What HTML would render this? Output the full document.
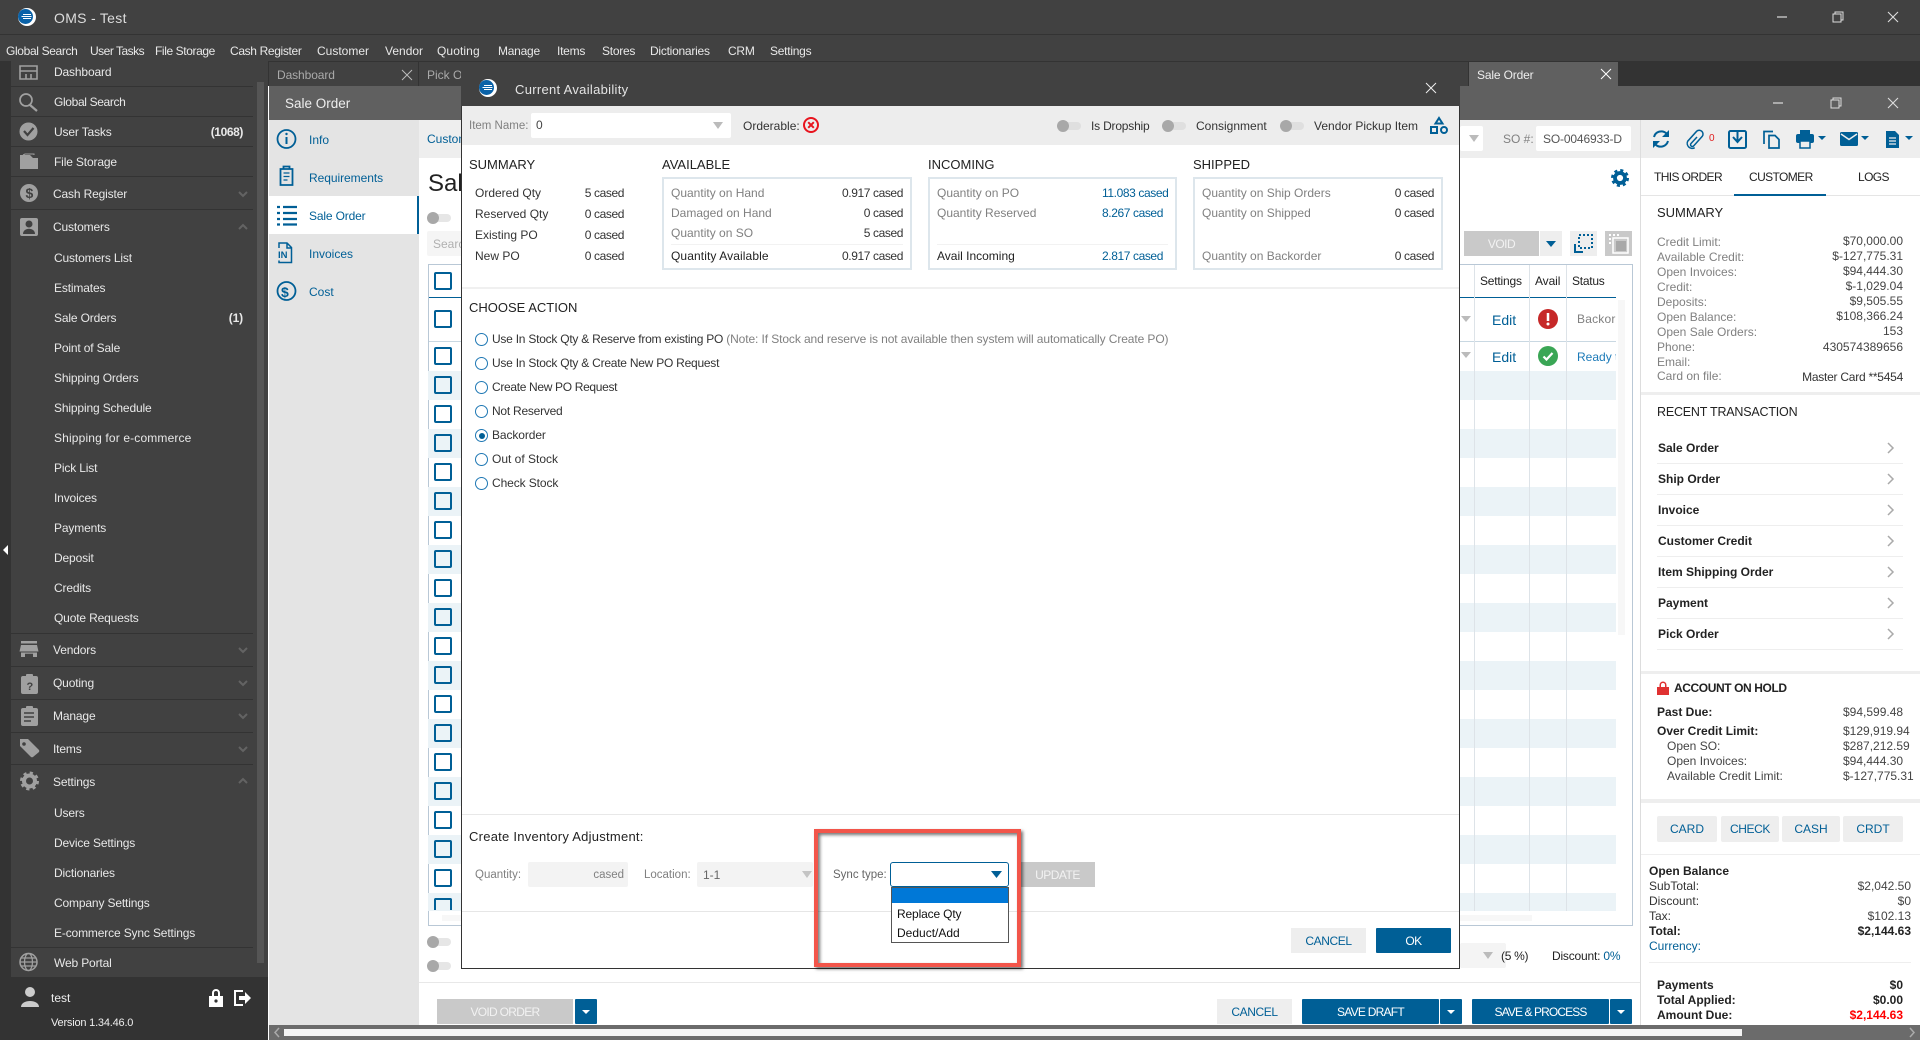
<!DOCTYPE html>
<html><head><meta charset="utf-8"><title>OMS - Test</title>
<style>
html,body{margin:0;padding:0;width:1920px;height:1040px;overflow:hidden;background:#fff}
body{position:relative;font:12px "Liberation Sans",Arial,sans-serif;color:#222}
div,svg{position:absolute}
.b{box-sizing:border-box}
.t{white-space:nowrap;line-height:16px;margin-top:-8px}
.s{color:#e8e8e8;letter-spacing:-.15px}
.m{color:#e8e8e8;letter-spacing:-.25px}
.bl{color:#005f96}
.g{color:#808080}
.h{font-size:13px;color:#222}
.f{font-weight:bold}
.v{letter-spacing:-.4px}
.r{letter-spacing:-.24px;color:#333}
.c{font-size:12px;letter-spacing:-.6px;color:#222}
.btn{line-height:26px;height:25px;text-align:center;box-sizing:border-box;white-space:nowrap;letter-spacing:-.5px}
.pb{background:#005f96;color:#fff;border-radius:1px}
.gb{background:#eee;color:#005f96}
.db{background:#c9c9c9;color:#f2f2f2}
.cb{width:18px;height:18px;box-sizing:border-box;border:2px solid #005f96;border-radius:2px;left:434px;background:transparent}
.sep{height:1px;background:#333;left:11px;width:242px}
.row{left:428px;width:1188px;height:29px;background:#ebf3f7}
.tg{width:24px;height:12px}
.tg i{position:absolute;left:2px;top:2px;width:22px;height:8px;border-radius:4px;background:#e6e6e6}
.tg b{position:absolute;left:0;top:0;width:12px;height:12px;border-radius:6px;background:#a8a8a8}
.rd{width:13px;height:13px;box-sizing:border-box;border:1.5px solid #1f78b4;border-radius:50%;left:475px;background:#fff}
.ln{height:1px;background:#eee}
.box{box-sizing:border-box;border:2px solid #dde6ec;height:93px;top:177px;background:#fff}
</style></head>
<body>
<!-- top chrome -->
<div style="left:0;top:0;width:1920px;height:61px;background:#414141"></div>
<div style="left:0;top:34px;width:1920px;height:1px;background:#333"></div>
<div style="left:0;top:61px;width:1920px;height:25px;background:#333"></div>
<svg style="left:18px;top:8px" width="18" height="18" viewBox="0 0 18 18"><circle cx="9" cy="9" r="9" fill="#fff"/><circle cx="7.500" cy="8.500" r="7.500" fill="#0a62a8"/><path d="M5 6.500h8M3.500 8.500h10M5 10.500h8" stroke="#fff"/></svg>
<div class="t" style="left:54px;top:18px;font-size:14px;color:#ddd;letter-spacing:.3px">OMS - Test</div>
<div class="t m" style="left:6px;top:51px;letter-spacing:-.35px">Global Search</div>
<div class="t m" style="left:90px;top:51px;letter-spacing:-.5px">User Tasks</div>
<div class="t m" style="left:155px;top:51px;letter-spacing:-.4px">File Storage</div>
<div class="t m" style="left:230px;top:51px;letter-spacing:-.35px">Cash Register</div>
<div class="t m" style="left:317px;top:51px;letter-spacing:0">Customer</div>
<div class="t m" style="left:385px;top:51px;letter-spacing:0">Vendor</div>
<div class="t m" style="left:437px;top:51px;letter-spacing:.1px">Quoting</div>
<div class="t m" style="left:498px;top:51px">Manage</div>
<div class="t m" style="left:557px;top:51px">Items</div>
<div class="t m" style="left:602px;top:51px">Stores</div>
<div class="t m" style="left:650px;top:51px">Dictionaries</div>
<div class="t m" style="left:728px;top:51px">CRM</div>
<div class="t m" style="left:770px;top:51px">Settings</div>
<svg style="left:1770px;top:10px" width="140" height="14" viewBox="0 0 140 14" fill="none" stroke="#ddd"><path d="M7 7h10" stroke-width="1.200"/><path d="M63 4h8v8h-8zM65 4V2h8v8h-2"/><path d="M118 2l10 10M128 2l-10 10" stroke-width="1.100"/></svg>

<!-- sidebar -->
<div style="left:0;top:61px;width:268px;height:979px;background:#333"></div>
<div style="left:11px;top:61px;width:257px;height:916px;background:#414141"></div>
<div style="left:257px;top:82px;width:7px;height:881px;background:#555"></div>
<svg style="left:0;top:544px" width="10" height="12"><path d="M8 1L3 6l5 5z" fill="#fff"/></svg>
<div class="sep" style="top:86px"></div><div class="sep" style="top:116px"></div><div class="sep" style="top:146px"></div><div class="sep" style="top:176px"></div><div class="sep" style="top:209px"></div><div class="sep" style="top:633px"></div><div class="sep" style="top:666px"></div><div class="sep" style="top:699px"></div><div class="sep" style="top:732px"></div><div class="sep" style="top:764px"></div><div class="sep" style="top:947px"></div>
<div class="t s" style="left:54px;top:72px">Dashboard</div>
<div class="t s" style="left:54px;top:102px;letter-spacing:-.35px">Global Search</div>
<div class="t s" style="left:54px;top:132px">User Tasks</div>
<div class="t s f" style="right:1677px;top:132px;letter-spacing:-.4px">(1068)</div>
<div class="t s" style="left:54px;top:162px">File Storage</div>
<div class="t s" style="left:53px;top:194px">Cash Register</div>
<div class="t s" style="left:53px;top:227px">Customers</div>
<div class="t s" style="left:54px;top:258px">Customers List</div>
<div class="t s" style="left:54px;top:288px">Estimates</div>
<div class="t s" style="left:54px;top:318px">Sale Orders</div>
<div class="t s f" style="right:1677px;top:318px">(1)</div>
<div class="t s" style="left:54px;top:348px">Point of Sale</div>
<div class="t s" style="left:54px;top:378px">Shipping Orders</div>
<div class="t s" style="left:54px;top:408px">Shipping Schedule</div>
<div class="t s" style="left:54px;top:438px;letter-spacing:.15px">Shipping for e-commerce</div>
<div class="t s" style="left:54px;top:468px">Pick List</div>
<div class="t s" style="left:54px;top:498px">Invoices</div>
<div class="t s" style="left:54px;top:528px">Payments</div>
<div class="t s" style="left:54px;top:558px">Deposit</div>
<div class="t s" style="left:54px;top:588px">Credits</div>
<div class="t s" style="left:54px;top:618px">Quote Requests</div>
<div class="t s" style="left:53px;top:650px">Vendors</div>
<div class="t s" style="left:53px;top:683px">Quoting</div>
<div class="t s" style="left:53px;top:716px">Manage</div>
<div class="t s" style="left:53px;top:749px">Items</div>
<div class="t s" style="left:53px;top:782px">Settings</div>
<div class="t s" style="left:54px;top:813px">Users</div>
<div class="t s" style="left:54px;top:843px">Device Settings</div>
<div class="t s" style="left:54px;top:873px">Dictionaries</div>
<div class="t s" style="left:54px;top:903px">Company Settings</div>
<div class="t s" style="left:54px;top:933px">E-commerce Sync Settings</div>
<div class="t s" style="left:54px;top:963px">Web Portal</div>
<!-- sidebar icons -->
<svg style="left:0;top:61px" width="268" height="916" viewBox="0 61 268 916">
<g fill="none" stroke="#a0a0a0">
<path d="M20 66h17v13H20zM20 71h17M26 74v5M31 74v5" stroke-width="1.600"/>
<circle cx="26" cy="100" r="6" stroke-width="1.700"/><path d="M30 105l7 6" stroke-width="2.200"/>
</g>
<g fill="#a0a0a0">
<circle cx="28.500" cy="131.500" r="9"/>
<path d="M20 155h10l3 3h5v11H20z"/>
<circle cx="29" cy="193" r="9"/>
<rect x="20" y="218" width="18" height="18" rx="2"/>
<path d="M21 641h16v2.500H21zM21 645h16l1.500 6.500h-19zM21 652.500h4V657h-4zM33 652.500h4V657h-4zM25 652.500h8v1.200h-8z"/>
<rect x="21" y="676" width="17" height="18" rx="2"/><rect x="26" y="674" width="7" height="4" rx="1"/>
<rect x="21" y="708" width="17" height="18" rx="2"/><rect x="26" y="706" width="7" height="4" rx="1"/>
<path d="M20 739h8l11 11a2 2 0 0 1 0 2l-6 5a2 2 0 0 1-2 0L20 746z"/>
</g>
<path d="M24 131l3.500 4 6-7" fill="none" stroke="#414141" stroke-width="2.200"/>
<path d="M34 155v-1h-9l-2 1" fill="none" stroke="#a0a0a0"/>
<text x="25.500" y="198" font-size="14" fill="#414141" font-weight="bold" font-family="Liberation Sans">$</text>
<circle cx="29" cy="224" r="3.500" fill="#414141"/><path d="M23 234c0-7 12-7 12 0z" fill="#414141"/>
<text x="26.500" y="690" font-size="11" fill="#414141" font-weight="bold" font-family="Liberation Sans">?</text>
<path d="M24 713h10M24 717h10M24 721h7" stroke="#414141" stroke-width="1.500"/>
<circle cx="24" cy="744" r="1.800" fill="#414141"/>
<g fill="none" stroke="#a0a0a0"><circle cx="29.500" cy="781" r="5.500" stroke-width="4"/><circle cx="29.500" cy="781" r="8" stroke-width="3" stroke-dasharray="3.100 3.180"/>
<circle cx="28.500" cy="962" r="8.500" stroke-width="1.500"/><ellipse cx="28.500" cy="962" rx="4" ry="8.500" stroke-width="1.300"/><path d="M20 962h17M21 958h15M21 966h15" stroke-width="1.200"/></g>
<g fill="none" stroke="#636363" stroke-width="2"><path d="M239 192l4 4 4-4M239 648l4 4 4-4M239 681l4 4 4-4M239 714l4 4 4-4M239 747l4 4 4-4M239 229l4-4 4 4M239 783l4-4 4 4"/></g>
</svg>
<!-- footer -->
<svg style="left:18px;top:985px" width="24" height="24"><circle cx="12" cy="7" r="5" fill="#ccc"/><path d="M3 22c0-8 18-8 18 0z" fill="#ccc"/></svg>
<div class="t" style="left:51px;top:998px;color:#eee">test</div>
<div class="t" style="left:51px;top:1023px;color:#eee;font-size:11px;letter-spacing:-.2px">Version 1.34.46.0</div>
<svg style="left:208px;top:988px" width="44" height="20" fill="#fff"><path d="M1 8h14v11H1zM4 8V5a4 4 0 0 1 8 0v3h-2V5a2 2 0 0 0-4 0v3z"/><circle cx="8" cy="13" r="1.600" fill="#333"/><path d="M35 3h-8v14h8" fill="none" stroke="#fff" stroke-width="2"/><path d="M31 8h6V4l6 6-6 6v-4h-6z"/></svg>

<!-- tabs & window -->
<div style="left:269px;top:62px;width:149px;height:24px;background:#414141"></div>
<div class="t" style="left:277px;top:75px;color:#aaa;letter-spacing:-.1px">Dashboard</div>
<svg style="left:401px;top:69px" width="12" height="12" stroke="#bbb"><path d="M1 1l10 10M11 1L1 11"/></svg>
<div style="left:419px;top:62px;width:1049px;height:24px;background:#414141"></div>
<div class="t" style="left:427px;top:75px;color:#aaa">Pick O</div>
<div style="left:1469px;top:62px;width:149px;height:24px;background:#606060"></div>
<div class="t" style="left:1477px;top:75px;color:#eee;letter-spacing:-.15px">Sale Order</div>
<svg style="left:1600px;top:68px" width="12" height="12" stroke="#fff"><path d="M1 1l10 10M11 1L1 11"/></svg>
<div style="left:269px;top:86px;width:1651px;height:34px;background:#606060"></div>
<div class="t" style="left:285px;top:104px;color:#eee;font-size:13.500px">Sale Order</div>
<svg style="left:1770px;top:96px" width="140" height="14" fill="none" stroke="#ddd"><path d="M3 7h10" stroke-width="1.200"/><path d="M61 4h8v8h-8zM63 4V2h8v8h-2"/><path d="M118 2l10 10M128 2l-10 10" stroke-width="1.100"/></svg>

<!-- left panel -->
<div style="left:269px;top:120px;width:150px;height:905px;background:#e4e4e4"></div>
<div class="b" style="left:269px;top:196px;width:150px;height:38px;background:#fff;border-right:2px solid #005f96"></div>
<div class="t bl" style="left:309px;top:140px">Info</div>
<div class="t bl" style="left:309px;top:178px;letter-spacing:-.05px">Requirements</div>
<div class="t bl" style="left:309px;top:216px;letter-spacing:-.15px">Sale Order</div>
<div class="t bl" style="left:309px;top:254px">Invoices</div>
<div class="t bl" style="left:309px;top:292px">Cost</div>
<svg style="left:276px;top:128px" width="22" height="176" viewBox="0 0 22 176" fill="none" stroke="#005f96">
<circle cx="10.500" cy="11" r="9" stroke-width="1.800"/><path d="M10.500 9v7" stroke-width="2"/><circle cx="10.500" cy="6" r="1.200" fill="#005f96" stroke="none"/>
<path d="M4.500 41h12v16h-12z M7.500 41v-2.500h6V41" stroke-width="1.800"/><path d="M7.500 45h6M7.500 48.500h6M7.500 52h4" stroke-width="1.300"/>
<path d="M1 79h3M7 79h14M1 85h3M7 85h14M1 91h3M7 91h14M1 96.500h3M7 96.500h14" stroke-width="2.300"/>
<path d="M3 120v-5h8l4.500 4.500v15H3v-2M11 115v5h4.500" stroke-width="1.500"/>
<circle cx="10.500" cy="163" r="9" stroke-width="1.800"/>
</svg>
<svg style="left:277px;top:247px" width="16" height="12"><text x="1" y="11" font-size="9.500" font-weight="bold" fill="#005f96" font-family="Liberation Sans">IN</text></svg>
<svg style="left:281px;top:282px" width="11" height="20"><text x="0" y="15" font-size="14" font-weight="bold" fill="#005f96" font-family="Liberation Sans">$</text></svg>

<!-- main bg -->
<div style="left:419px;top:120px;width:1221px;height:38px;background:#eee"></div>
<div class="t bl" style="left:427px;top:139px">Customer</div>
<div class="t" style="left:428px;top:184px;font-size:24px;line-height:30px;margin-top:-15px;color:#222">Sale Order</div>
<div class="tg" style="left:427px;top:212px"><i></i><b></b></div>
<div class="b" style="left:427px;top:231px;width:200px;height:25px;background:#f5f5f5;border-radius:2px"></div>
<div class="t" style="left:433px;top:244px;color:#b0b0b0">Search</div>
<!-- grid -->
<div class="b" style="left:428px;top:264px;width:1205px;height:662px;border:1px solid #b9c8d6;background:#fff"></div>
<div style="left:429px;top:297px;width:1187px;height:1px;background:#005f96"></div>
<div style="left:429px;top:341px;width:1187px;height:1px;background:#c9d8e2"></div>
<div class="row" style="top:371px"></div><div class="row" style="top:429px"></div><div class="row" style="top:487px"></div><div class="row" style="top:545px"></div><div class="row" style="top:603px"></div><div class="row" style="top:661px"></div><div class="row" style="top:719px"></div><div class="row" style="top:777px"></div><div class="row" style="top:835px"></div><div class="row" style="top:893px;height:18px"></div>
<div class="cb" style="top:272px"></div><div class="cb" style="top:310px"></div><div class="cb" style="top:347px"></div><div class="cb" style="top:376px"></div><div class="cb" style="top:405px"></div><div class="cb" style="top:434px"></div><div class="cb" style="top:463px"></div><div class="cb" style="top:492px"></div><div class="cb" style="top:521px"></div><div class="cb" style="top:550px"></div><div class="cb" style="top:579px"></div><div class="cb" style="top:608px"></div><div class="cb" style="top:637px"></div><div class="cb" style="top:666px"></div><div class="cb" style="top:695px"></div><div class="cb" style="top:724px"></div><div class="cb" style="top:753px"></div><div class="cb" style="top:782px"></div><div class="cb" style="top:811px"></div><div class="cb" style="top:840px"></div><div class="cb" style="top:869px"></div>
<div class="cb" style="top:898px;height:12px;border-bottom:0;border-radius:2px 2px 0 0"></div>
<div style="left:1474px;top:265px;width:1px;height:646px;background:#dde3e8"></div>
<div style="left:1529px;top:265px;width:1px;height:646px;background:#dde3e8"></div>
<div style="left:1566px;top:265px;width:1px;height:646px;background:#dde3e8"></div>
<div style="left:429px;top:911px;width:1203px;height:14px;background:#fff"></div>
<div style="left:442px;top:915px;width:1090px;height:6px;background:#f7f7f7"></div>
<div style="left:1618px;top:300px;width:7px;height:335px;background:#f7f7f7"></div>
<div class="t" style="left:1480px;top:281px;letter-spacing:-.2px">Settings</div>
<div class="t" style="left:1535px;top:281px;letter-spacing:-.1px">Avail</div>
<div class="t" style="left:1572px;top:281px;letter-spacing:-.25px">Status</div>
<div class="t bl" style="left:1492px;top:320px;font-size:14px">Edit</div>
<div class="t bl" style="left:1492px;top:357px;font-size:14px">Edit</div>
<svg style="left:1538px;top:309px" width="20" height="20"><circle cx="10" cy="10" r="10" fill="#c62828"/><path d="M10 4v8" stroke="#fff" stroke-width="2.500"/><circle cx="10" cy="15" r="1.500" fill="#fff"/></svg>
<svg style="left:1538px;top:346px" width="20" height="20"><circle cx="10" cy="10" r="10" fill="#3aa655"/><path d="M5.500 10.500l3 3 6-6.500" stroke="#fff" stroke-width="2.200" fill="none"/></svg>
<div style="left:1577px;top:310px;width:39px;height:18px;overflow:hidden"><div class="t g" style="left:0;top:9px;letter-spacing:.2px">Backorder</div></div>
<div style="left:1577px;top:347px;width:39px;height:18px;overflow:hidden"><div class="t" style="left:0;top:10px;color:#1c7ab8">Ready to</div></div>
<svg style="left:1460px;top:315px" width="12" height="48"><path d="M1 1h10L6 7zM1 37h10l-5 6z" fill="#bbb"/></svg>
<!-- toolbar to the right of dialog -->
<div class="b" style="left:1460px;top:126px;width:23px;height:25px;background:#fff;border-radius:2px"></div>
<svg style="left:1469px;top:135px" width="10" height="8"><path d="M0 0h10L5 7z" fill="#bbb"/></svg>
<div class="t g" style="left:1503px;top:139px">SO #:</div>
<div style="left:1536px;top:126px;width:95px;height:25px;background:#fff;border-radius:2px"></div>
<div class="t" style="left:1543px;top:139px;color:#555;letter-spacing:-.15px">SO-0046933-D</div>
<svg style="left:1611px;top:169px" width="18" height="18" fill="none" stroke="#005f96"><circle cx="9" cy="9" r="5" stroke-width="3.800"/><circle cx="9" cy="9" r="7.500" stroke-width="3" stroke-dasharray="3 2.890"/></svg>
<div class="btn db" style="left:1464px;top:231px;width:75px">VOID</div>
<div style="left:1540px;top:231px;width:22px;height:25px;background:#eee"></div>
<svg style="left:1546px;top:241px" width="10" height="6"><path d="M0 0h10L5 6z" fill="#005f96"/></svg>
<div style="left:1570px;top:231px;width:27px;height:25px;background:#eee"></div>
<svg style="left:1573px;top:233px" width="21" height="21" fill="none" stroke="#005f96"><path d="M2 11v8h8" stroke-width="2"/><path d="M6 2h13v13H6z" stroke-width="2" stroke-dasharray="2 2"/></svg>
<div style="left:1605px;top:231px;width:27px;height:25px;background:#c9c9c9"></div>
<svg style="left:1608px;top:233px" width="21" height="21"><path d="M1 1h2v2H1zM5 1h2v2H5zM9 1h2v2H9zM1 5h2v2H1zM1 9h2v2H1z" fill="#fff"/><path d="M5 5h15v15H5z" fill="none" stroke="#fff" stroke-width="1.500"/><rect x="8" y="8" width="10" height="10" fill="#a8a8a8"/></svg>

<!-- lower main area -->
<div class="tg" style="left:427px;top:936px"><i></i><b></b></div>
<div class="tg" style="left:427px;top:960px"><i></i><b></b></div>
<div style="left:419px;top:982px;width:1221px;height:1px;background:#e8e8e8"></div>
<div style="left:1460px;top:943px;width:46px;height:25px;background:#f4f4f4;border-radius:2px"></div>
<svg style="left:1483px;top:952px" width="10" height="8"><path d="M0 0h10L5 7z" fill="#bbb"/></svg>
<div class="t" style="left:1501px;top:956px;letter-spacing:-.3px">(5 %)</div>
<div class="t" style="left:1552px;top:956px;letter-spacing:-.2px">Discount: <span class="bl">0%</span></div>
<div class="btn db" style="left:437px;top:999px;width:136px;letter-spacing:-.7px">VOID ORDER</div>
<div class="btn pb" style="left:575px;top:999px;width:22px"></div>
<div class="btn gb" style="left:1217px;top:999px;width:75px;letter-spacing:-.4px">CANCEL</div>
<div class="btn pb" style="left:1302px;top:999px;width:137px;letter-spacing:-.75px">SAVE DRAFT</div>
<div class="btn pb" style="left:1440px;top:999px;width:22px"></div>
<div class="btn pb" style="left:1472px;top:999px;width:137px;letter-spacing:-.9px">SAVE &amp; PROCESS</div>
<div class="btn pb" style="left:1610px;top:999px;width:22px"></div>
<svg style="left:575px;top:1009px" width="1060" height="6" fill="#fff"><path d="M7 1h8l-4 4zM872 1h8l-4 4zM1042 1h8l-4 4z"/></svg>

<!-- right panel -->
<div style="left:1640px;top:120px;width:1px;height:905px;background:#ddd"></div>
<div style="left:1641px;top:120px;width:279px;height:38px;background:#eee"></div>
<svg style="left:1650px;top:125px" width="270" height="28" viewBox="1650 125 270 28">
<g fill="none" stroke="#005f96">
<path d="M1654 137a7.500 7.500 0 0 1 12.500-3.500M1668 141a7.500 7.500 0 0 1-12.500 3.500" stroke-width="2"/>
<path d="M1697 137l-6 6.500a1.800 1.800 0 0 0 2.700 2.400l8.500-9.500a3.800 3.800 0 0 0-5.500-5.200l-9 10a5 5 0 0 0 7 6.500" stroke-width="1.500"/>
<rect x="1729" y="131" width="17" height="17" rx="1.500" stroke-width="2"/><path d="M1737.500 130v11M1733 137l4.500 5 4.500-5" stroke-width="2"/>
<path d="M1764 144V131.500h9M1769 135.500h6l4 4v8.500h-10z" stroke-width="1.700"/>
</g>
<g fill="#005f96">
<path d="M1669 130v7h-7zM1653 148v-7h7z"/>
<rect x="1796" y="134" width="18" height="9" rx="2"/><rect x="1800" y="130" width="10" height="4"/><rect x="1800" y="141" width="10" height="7" fill="#eee" stroke="#005f96" stroke-width="1.500"/>
<path d="M1818 136h8l-4 4zM1861 136h8l-4 4zM1905 136h8l-4 4z"/>
<rect x="1840" y="132" width="18" height="14" rx="1.500"/>
<path d="M1886 131h9l4 4v13h-13z"/>
</g>
<path d="M1841 134l8 5.500 8-5.500" fill="none" stroke="#eee" stroke-width="1.500"/>
<path d="M1889 138h7M1889 141h7M1889 144h7" stroke="#eee" stroke-width="1.300"/>
<text x="1709" y="141" font-size="10" fill="#e02020" font-family="Liberation Sans">0</text>
</svg>
<div class="t c" style="left:1654px;top:177px">THIS ORDER</div>
<div class="t c" style="left:1749px;top:177px">CUSTOMER</div>
<div class="t c" style="left:1858px;top:177px">LOGS</div>
<div style="left:1641px;top:195px;width:279px;height:1px;background:#e5e5e5"></div>
<div style="left:1734px;top:194px;width:92px;height:2px;background:#005f96"></div>
<div class="t h" style="left:1657px;top:213px">SUMMARY</div>
<div class="t g" style="left:1657px;top:242px">Credit Limit:</div><div class="t" style="right:17px;top:241px;color:#444">$70,000.00</div>
<div class="t g" style="left:1657px;top:257px">Available Credit:</div><div class="t" style="right:17px;top:256px;color:#444">$-127,775.31</div>
<div class="t g" style="left:1657px;top:272px">Open Invoices:</div><div class="t" style="right:17px;top:271px;color:#444">$94,444.30</div>
<div class="t g" style="left:1657px;top:287px">Credit:</div><div class="t" style="right:17px;top:286px;color:#444">$-1,029.04</div>
<div class="t g" style="left:1657px;top:302px">Deposits:</div><div class="t" style="right:17px;top:301px;color:#444">$9,505.55</div>
<div class="t g" style="left:1657px;top:317px">Open Balance:</div><div class="t" style="right:17px;top:316px;color:#444">$108,366.24</div>
<div class="t g" style="left:1657px;top:332px">Open Sale Orders:</div><div class="t" style="right:17px;top:331px;color:#444">153</div>
<div class="t g" style="left:1657px;top:347px">Phone:</div><div class="t" style="right:17px;top:347px;color:#444">430574389656</div>
<div class="t g" style="left:1657px;top:362px">Email:</div>
<div class="t g" style="left:1657px;top:376px">Card on file:</div><div class="t" style="right:17px;top:377px;color:#333;letter-spacing:-.25px">Master Card **5454</div>
<div style="left:1641px;top:392px;width:279px;height:3px;background:#eee"></div>
<div class="t h" style="left:1657px;top:412px;font-size:12.500px;letter-spacing:-.2px">RECENT TRANSACTION</div>
<div class="t f" style="left:1658px;top:448px">Sale Order</div><div class="ln" style="left:1657px;top:463px;width:246px"></div>
<div class="t f" style="left:1658px;top:479px">Ship Order</div><div class="ln" style="left:1657px;top:494px;width:246px"></div>
<div class="t f" style="left:1658px;top:510px">Invoice</div><div class="ln" style="left:1657px;top:525px;width:246px"></div>
<div class="t f" style="left:1658px;top:541px">Customer Credit</div><div class="ln" style="left:1657px;top:556px;width:246px"></div>
<div class="t f" style="left:1658px;top:572px">Item Shipping Order</div><div class="ln" style="left:1657px;top:587px;width:246px"></div>
<div class="t f" style="left:1658px;top:603px">Payment</div><div class="ln" style="left:1657px;top:618px;width:246px"></div>
<div class="t f" style="left:1658px;top:634px">Pick Order</div><div class="ln" style="left:1657px;top:649px;width:246px"></div>
<svg style="left:1885px;top:440px" width="12" height="200" fill="none" stroke="#aaa" stroke-width="1.500"><path d="M3 3l5 5-5 5M3 34l5 5-5 5M3 65l5 5-5 5M3 96l5 5-5 5M3 127l5 5-5 5M3 158l5 5-5 5M3 189l5 5-5 5"/></svg>
<div style="left:1641px;top:671px;width:279px;height:3px;background:#eee"></div>
<svg style="left:1656px;top:681px" width="14" height="15"><path d="M1 6h12v8H1zM3.500 6V4a3.500 3.500 0 0 1 7 0v2H9V4a2 2 0 0 0-4 0v2z" fill="#e03131"/></svg>
<div class="t f" style="left:1674px;top:688px;letter-spacing:-.4px">ACCOUNT ON HOLD</div>
<div class="t f" style="left:1657px;top:712px">Past Due:</div><div class="t" style="left:1843px;top:712px;color:#444">$94,599.48</div>
<div class="t f" style="left:1657px;top:731px">Over Credit Limit:</div><div class="t" style="left:1843px;top:731px;color:#444">$129,919.94</div>
<div class="t" style="left:1667px;top:746px;color:#444">Open SO:</div><div class="t" style="left:1843px;top:746px;color:#444">$287,212.59</div>
<div class="t" style="left:1667px;top:761px;color:#444">Open Invoices:</div><div class="t" style="left:1843px;top:761px;color:#444">$94,444.30</div>
<div class="t" style="left:1667px;top:776px;color:#444">Available Credit Limit:</div><div class="t" style="left:1843px;top:776px;color:#444">$-127,775.31</div>
<div style="left:1641px;top:799px;width:279px;height:4px;background:#eee"></div>
<div class="btn gb" style="left:1657px;top:816px;width:60px;line-height:27px;height:26px;border-radius:2px;letter-spacing:0">CARD</div>
<div class="btn gb" style="left:1721px;top:816px;width:58px;line-height:27px;height:26px;border-radius:2px;letter-spacing:-.4px">CHECK</div>
<div class="btn gb" style="left:1782px;top:816px;width:58px;line-height:27px;height:26px;border-radius:2px;letter-spacing:0">CASH</div>
<div class="btn gb" style="left:1843px;top:816px;width:60px;line-height:27px;height:26px;border-radius:2px;letter-spacing:0">CRDT</div>
<div class="ln" style="left:1641px;top:854px;width:279px"></div>
<div class="t f" style="left:1649px;top:871px">Open Balance</div>
<div class="t" style="left:1649px;top:886px;color:#333">SubTotal:</div><div class="t" style="right:9px;top:886px;color:#444">$2,042.50</div>
<div class="t" style="left:1649px;top:901px;color:#333">Discount:</div><div class="t" style="right:9px;top:901px;color:#444">$0</div>
<div class="t" style="left:1649px;top:916px;color:#333">Tax:</div><div class="t" style="right:9px;top:916px;color:#444">$102.13</div>
<div class="t f" style="left:1649px;top:931px">Total:</div><div class="t f" style="right:9px;top:931px">$2,144.63</div>
<div class="t bl" style="left:1649px;top:946px">Currency:</div>
<div class="ln" style="left:1649px;top:962px;width:262px"></div>
<div class="t f" style="left:1657px;top:985px">Payments</div><div class="t f" style="right:17px;top:985px">$0</div>
<div class="t f" style="left:1657px;top:1000px">Total Applied:</div><div class="t f" style="right:17px;top:1000px">$0.00</div>
<div class="t f" style="left:1657px;top:1015px">Amount Due:</div><div class="t f" style="right:17px;top:1015px;color:#f00">$2,144.63</div>

<!-- bottom scrollbar -->
<div style="left:269px;top:1025px;width:1651px;height:15px;background:#6b6b6b"></div>
<div style="left:284px;top:1029px;width:1458px;height:7px;background:#f4f4f4"></div>
<svg style="left:272px;top:1027px" width="1646" height="11" fill="none" stroke="#aaa" stroke-width="1.500"><path d="M7 1L3 5.500 7 10M1638 1l4 4.500-4 4.500"/></svg>

<!-- dialog -->
<div class="b" style="left:461px;top:71px;width:999px;height:898px;background:#fff;border:1px solid #333"></div>
<div style="left:461px;top:71px;width:999px;height:35px;background:#414141"></div>
<svg style="left:479px;top:79px" width="18" height="18" viewBox="0 0 18 18"><circle cx="9" cy="9" r="9" fill="#fff"/><circle cx="7.500" cy="8.500" r="7.500" fill="#0a62a8"/><path d="M5 6.500h8M3.500 8.500h10M5 10.500h8" stroke="#fff"/></svg>
<div class="t" style="left:515px;top:89.500px;color:#e4e4e4;font-size:13px;letter-spacing:.3px">Current Availability</div>
<svg style="left:1425px;top:82px" width="12" height="12" stroke="#eee"><path d="M1 1l10 10M11 1L1 11"/></svg>
<div style="left:462px;top:106px;width:997px;height:39px;background:#ededed"></div>
<div class="t g" style="left:469px;top:126px;font-size:11.500px">Item Name:</div>
<div style="left:531px;top:113px;width:200px;height:25px;background:#fff;border-radius:2px"></div>
<div class="t" style="left:536px;top:125px;color:#444">0</div>
<svg style="left:713px;top:122px" width="10" height="8"><path d="M0 0h10L5 7z" fill="#bbb"/></svg>
<div class="t" style="left:743px;top:126px;color:#333">Orderable:</div>
<svg style="left:803px;top:117px" width="16" height="16" fill="none" stroke="#e8141e"><circle cx="8" cy="8" r="7" stroke-width="2"/><path d="M5.200 5.200l5.600 5.600M10.800 5.200l-5.600 5.600" stroke-width="2"/></svg>
<div class="tg" style="left:1057px;top:120px"><i style="background:#dfdfdf"></i><b></b></div>
<div class="t" style="left:1091px;top:126px;color:#333;letter-spacing:-.2px">Is Dropship</div>
<div class="tg" style="left:1162px;top:120px"><i style="background:#dfdfdf"></i><b></b></div>
<div class="t" style="left:1196px;top:126px;color:#333">Consignment</div>
<div class="tg" style="left:1280px;top:120px"><i style="background:#dfdfdf"></i><b></b></div>
<div class="t" style="left:1314px;top:126px;color:#333">Vendor Pickup Item</div>
<svg style="left:1429px;top:116px" width="20" height="19" fill="none" stroke="#005f96" stroke-width="2"><path d="M10 2l3.500 5.500h-7z"/><rect x="2" y="11" width="6" height="6"/><circle cx="15" cy="14" r="3"/></svg>
<div class="t h" style="left:469px;top:165px">SUMMARY</div>
<div class="t h" style="left:662px;top:165px">AVAILABLE</div>
<div class="t h" style="left:928px;top:165px">INCOMING</div>
<div class="t h" style="left:1193px;top:165px">SHIPPED</div>
<div class="t" style="left:475px;top:193px;color:#333">Ordered Qty</div><div class="t v" style="right:1296px;top:193px;color:#333">5 cased</div>
<div class="t" style="left:475px;top:214px;color:#333">Reserved Qty</div><div class="t v" style="right:1296px;top:214px;color:#333">0 cased</div>
<div class="t" style="left:475px;top:235px;color:#333">Existing PO</div><div class="t v" style="right:1296px;top:235px;color:#333">0 cased</div>
<div class="t" style="left:475px;top:256px;color:#333">New PO</div><div class="t v" style="right:1296px;top:256px;color:#333">0 cased</div>
<div class="box" style="left:662px;width:250px"></div>
<div class="t g" style="left:671px;top:193px">Quantity on Hand</div><div class="t v" style="right:1017px;top:193px;color:#333">0.917 cased</div>
<div class="t g" style="left:671px;top:213px">Damaged on Hand</div><div class="t v" style="right:1017px;top:213px;color:#333">0 cased</div>
<div class="t g" style="left:671px;top:233px">Quantity on SO</div><div class="t v" style="right:1017px;top:233px;color:#333">5 cased</div>
<div class="ln" style="left:671px;top:244px;width:232px;background:#f2f2f2"></div>
<div class="t" style="left:671px;top:256px;color:#222;letter-spacing:.1px">Quantity Available</div><div class="t v" style="right:1017px;top:256px;color:#333">0.917 cased</div>
<div class="box" style="left:928px;width:249px"></div>
<div class="t g" style="left:937px;top:193px">Quantity on PO</div><div class="t bl v" style="left:1102px;top:193px">11.083 cased</div>
<div class="t g" style="left:937px;top:213px">Quantity Reserved</div><div class="t bl v" style="left:1102px;top:213px">8.267 cased</div>
<div class="ln" style="left:937px;top:244px;width:231px;background:#f2f2f2"></div>
<div class="t" style="left:937px;top:256px;color:#222">Avail Incoming</div><div class="t bl v" style="left:1102px;top:256px">2.817 cased</div>
<div class="box" style="left:1193px;width:250px"></div>
<div class="t g" style="left:1202px;top:193px">Quantity on Ship Orders</div><div class="t v" style="right:486px;top:193px;color:#333">0 cased</div>
<div class="t g" style="left:1202px;top:213px">Quantity on Shipped</div><div class="t v" style="right:486px;top:213px;color:#333">0 cased</div>
<div class="t g" style="left:1202px;top:256px">Quantity on Backorder</div><div class="t v" style="right:486px;top:256px;color:#333">0 cased</div>
<div style="left:462px;top:287px;width:997px;height:2px;background:#f0f0f0"></div>
<div class="t h" style="left:469px;top:308px">CHOOSE ACTION</div>
<div class="rd" style="top:333px"></div><div class="t r" style="left:492px;top:339px">Use In Stock Qty &amp; Reserve from existing PO <span class="g" style="letter-spacing:-.1px">(Note: If Stock and reserve is not available then system will automatically Create PO)</span></div>
<div class="rd" style="top:357px"></div><div class="t r" style="left:492px;top:363px">Use In Stock Qty &amp; Create New PO Request</div>
<div class="rd" style="top:381px"></div><div class="t r" style="left:492px;top:387px;letter-spacing:-.33px">Create New PO Request</div>
<div class="rd" style="top:405px"></div><div class="t r" style="left:492px;top:411px">Not Reserved</div>
<div class="rd" style="top:429px"></div><div style="left:478.500px;top:432.500px;width:6px;height:6px;border-radius:50%;background:#005f96"></div><div class="t r" style="left:492px;top:435px;letter-spacing:-.1px">Backorder</div>
<div class="rd" style="top:453px"></div><div class="t r" style="left:492px;top:459px;letter-spacing:0">Out of Stock</div>
<div class="rd" style="top:477px"></div><div class="t r" style="left:492px;top:483px;letter-spacing:-.1px">Check Stock</div>
<div style="left:462px;top:814px;width:997px;height:1px;background:#e8e8e8"></div>
<div class="t" style="left:469px;top:837px;color:#222;font-size:13px;letter-spacing:.25px">Create Inventory Adjustment:</div>
<div class="t g" style="left:475px;top:875px;font-size:11.500px">Quantity:</div>
<div style="left:528px;top:862px;width:100px;height:25px;background:#f3f3f3;border-radius:2px"></div>
<div class="t g" style="right:1296px;top:875px;font-size:11.500px">cased</div>
<div class="t g" style="left:644px;top:875px;font-size:11.500px">Location:</div>
<div style="left:697px;top:862px;width:116px;height:25px;background:#f3f3f3;border-radius:2px"></div>
<div class="t" style="left:703px;top:875px;color:#666">1-1</div>
<svg style="left:802px;top:871px" width="10" height="8"><path d="M0 0h10L5 7z" fill="#c4c4c4"/></svg>
<div style="left:462px;top:911px;width:997px;height:1px;background:#e6e6e6"></div>
<div class="btn db" style="left:1020px;top:862px;width:75px">UPDATE</div>
<div class="btn gb" style="left:1291px;top:928px;width:75px;letter-spacing:-.4px">CANCEL</div>
<div class="btn pb" style="left:1376px;top:928px;width:75px">OK</div>

<!-- highlight -->
<div class="b" style="left:814px;top:829px;width:207px;height:138px;border:4px solid #f2554a;box-shadow:2px 2px 3px rgba(0,0,0,.55),inset 2px 2px 3px rgba(0,0,0,.55)"></div>
<div class="t" style="left:833px;top:875px;color:#666;font-size:11.500px">Sync type:</div>
<div class="b" style="left:890px;top:862px;width:119px;height:25px;background:#fff;border:1px solid #005f96;border-radius:3px"></div>
<svg style="left:991px;top:871px" width="11" height="8"><path d="M0 0h11L5.500 7z" fill="#005f96"/></svg>
<div class="b" style="left:891px;top:887px;width:118px;height:56px;background:#fff;border:1px solid #555"></div>
<div style="left:892px;top:888px;width:116px;height:15px;background:#0078d7"></div>
<div class="t" style="left:897px;top:914px;color:#111;letter-spacing:-.15px">Replace Qty</div>
<div class="t" style="left:897px;top:933px;color:#111">Deduct/Add</div>
</body></html>
